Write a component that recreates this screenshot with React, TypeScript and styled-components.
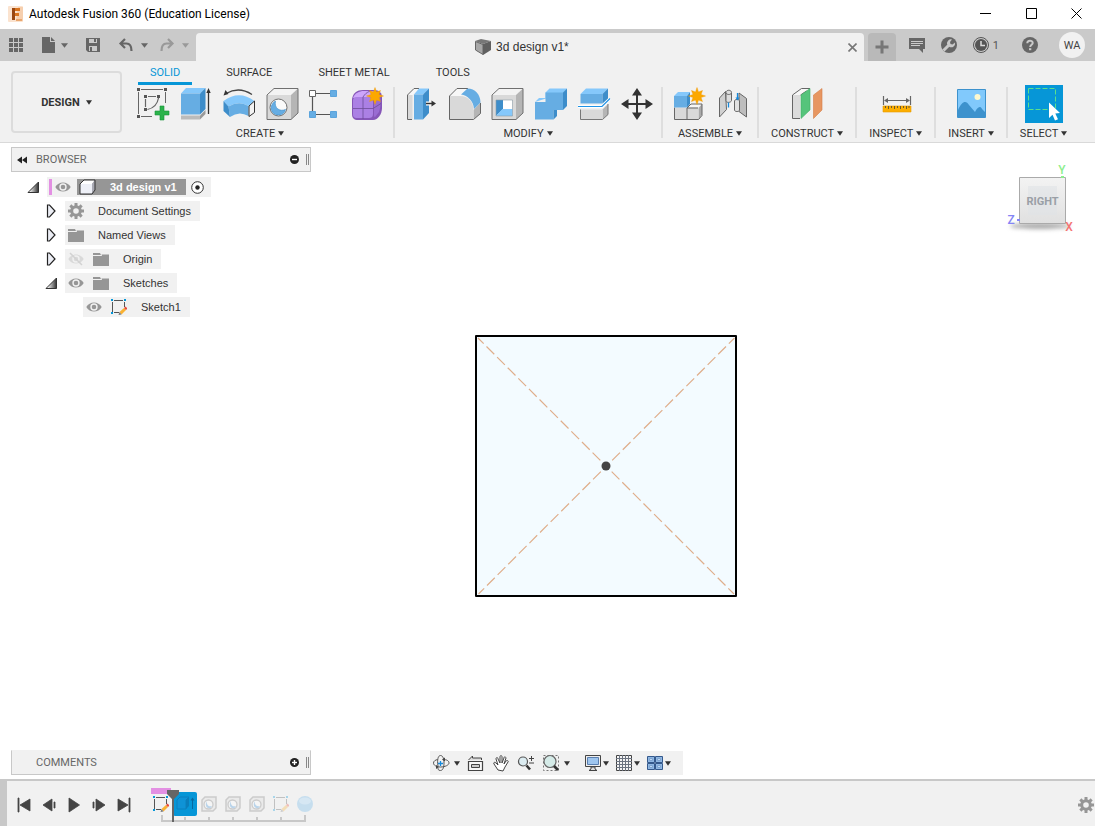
import React from "react";
import styled, { createGlobalStyle, css } from "styled-components";

const GlobalStyle = createGlobalStyle`
  * { box-sizing: border-box; }
  body { margin: 0; background: #fff; color: #333; font-family: "Liberation Sans", Arial, sans-serif; font-size: 11px; }
  button { border: 0; padding: 0; margin: 0; background: none; color: inherit; font: inherit; cursor: pointer; }
  svg { display: block; flex: none; }
  ul { list-style: none; margin: 0; padding: 0; }
`;

const Page = styled.div`
  min-height: 100vh;
  display: flex;
  flex-direction: column;
`;

/* ---------- window title ---------- */

const TitleBar = styled.header`
  height: 29px;
  display: flex;
  align-items: center;
  gap: 6px;
  padding-left: 8px;
  background: #fff;
  padding-bottom: 2px;
`;

const WindowTitle = styled.h1`
  margin: 0;
  flex: 1;
  font: 400 12px/16px Roboto, "Open Sans", sans-serif;
  color: #000;
`;

const WindowControls = styled.div`
  display: flex;
`;

const WindowButton = styled.button`
  width: 46px;
  height: 27px;
  display: grid;
  place-items: center;
  &:last-child { width: 41px; padding-left: 4px; }
`;

/* ---------- document bar ---------- */

const DocumentBar = styled.div`
  height: 32px;
  display: flex;
  align-items: flex-end;
  background: #cacaca;
  color: #666;
`;

const QuickTools = styled.div`
  height: 32px;
  display: flex;
  align-items: center;
  gap: 17px;
  padding: 0 7px 0 8px;
`;

const HistoryTools = styled.div`
  display: flex;
  gap: 11px;
`;

const QuickButton = styled.button<{ $faded?: boolean; $gap?: number }>`
  display: flex;
  align-items: center;
  gap: ${(p) => p.$gap ?? 5}px;
  color: ${(p) => (p.$faded ? "#999" : "#666")};
`;

const DocumentTab = styled.div`
  flex: 1;
  height: 28px;
  display: flex;
  align-items: center;
  border-radius: 4px 4px 0 0;
  background: #f1f1f1;
`;

const DocumentName = styled.div`
  flex: 1;
  display: flex;
  align-items: center;
  justify-content: center;
  gap: 5px;
  padding-left: 6px;
  font-size: 12px;
  color: #333;
`;

const TabClose = styled.button`
  width: 22px;
  height: 28px;
  display: grid;
  place-items: center;
`;

const NewTab = styled.button`
  width: 28px;
  height: 28px;
  margin: 0 4px;
  display: grid;
  place-items: center;
  border-radius: 4px 4px 0 0;
  background: #b9b9b9;
  color: #777;
`;

const AccountTools = styled.div`
  height: 32px;
  display: flex;
  align-items: center;
  gap: 16px;
  padding: 0 10px 0 9px;
`;

const Jobs = styled(QuickButton)`
  font-family: Roboto, sans-serif;
  margin-right: 7px;
  color: #555;
`;

const Avatar = styled.button`
  width: 26px;
  height: 26px;
  margin-left: 5px;
  border-radius: 50%;
  background: #f1f1f1;
  color: #444;
  font-family: Roboto, sans-serif;
`;

/* ---------- ribbon ---------- */

const Ribbon = styled.section`
  display: flex;
  background: #f1f1f1;
  border-bottom: 1px solid #d9d9d9;
  font-family: Roboto, "Liberation Sans", sans-serif;
  font-size: 11px;
`;

const Workspace = styled.button`
  width: 111px;
  height: 62px;
  margin: 10px 0 0 11px;
  display: flex;
  align-items: center;
  justify-content: center;
  gap: 6px;
  border: 2px solid #dcdcdc;
  border-radius: 4px;
  font-weight: 700;
`;

const RibbonBody = styled.div`
  flex: 1;
  padding-left: 9px;
`;

const RibbonTabs = styled.nav`
  height: 24px;
  display: flex;
  gap: 22px;
  padding-left: 7px;
`;

const RibbonTab = styled.button<{ $active?: boolean }>`
  height: 24px;
  padding: 2px 12px 0;
  line-height: 19px;
  border-bottom: 3px solid ${(p) => (p.$active ? "#0696d7" : "transparent")};
  color: ${(p) => (p.$active ? "#0696d7" : "#333")};
`;

const RibbonGroups = styled.div`
  display: flex;
`;

const Divider = styled.span`
  width: 2px;
  margin: 2px 4px 4px;
  background: #dedede;
`;

const Group = styled.div`
  display: flex;
  flex-direction: column;
`;

const GroupTools = styled.div`
  display: flex;
  justify-content: center;
`;

const ToolButton = styled.button`
  width: 43px;
  height: 38px;
  display: grid;
  place-items: center;
`;

const GroupLabel = styled.button`
  height: 19px;
  padding: 2px 8px 0;
  display: flex;
  align-items: center;
  justify-content: center;
  gap: 3px;
`;

/* ---------- canvas ---------- */

const Canvas = styled.main`
  flex: 1;
  min-height: 520px;
  position: relative;
  display: flex;
  flex-direction: column;
  justify-content: space-between;
  padding: 4px 0 4px 11px;
  background: #fff;
`;

const Sketch = styled.svg`
  position: absolute;
  left: 474px;
  top: 191px;
`;

const ViewCube = styled.svg`
  position: absolute;
  right: 15px;
  top: 17px;
`;

const PanelHeader = styled.div<{ $open?: boolean }>`
  width: 300px;
  height: 25px;
  display: flex;
  align-items: center;
  gap: 7px;
  padding: 0 1px 0 5px;
  border: 1px solid #c8c8c8;
  ${(p) => !p.$open && css`border-top-color: #f1f1f1; padding-left: 24px;`}
  background: #f1f1f1;
  font-family: Roboto, sans-serif;
  color: #666;
`;

const PanelTitle = styled.h2`
  margin: 0;
  flex: 1;
  font-size: 11px;
  font-weight: 400;
`;

const PanelGrip = styled.span`
  width: 3px;
  height: 11px;
  border: solid #888;
  border-width: 0 1px;
`;

const Tree = styled.ul`
  padding: 5px 0 0 15px;
`;

const TreeRow = styled.li<{ $level: number }>`
  height: 20px;
  margin-bottom: 4px;
  padding-left: ${(p) => p.$level * 18}px;
  display: flex;
  align-items: center;
`;

const Twisty = styled.button`
  width: 21px;
  height: 20px;
  display: flex;
  align-items: center;
`;

const TreeItem = styled.div`
  height: 20px;
  display: flex;
  align-items: center;
  gap: 9px;
  padding: 0 9px 0 3px;
  background: #f1f1f1;
`;

const TreeLabel = styled.span`
  padding-left: 5px;
`;

const RootItem = styled(TreeItem)`
  gap: 5px;
  padding: 0 7px 0 2px;
`;

const RootMark = styled.span`
  width: 3px;
  height: 16px;
  margin-right: -2px;
  background: #e390e3;
`;

const RootName = styled.span`
  height: 16px;
  margin-left: 1px;
  padding: 0 9px 0 2px;
  display: flex;
  align-items: center;
  gap: 14px;
  background: #969696;
  color: #fff;
  font-weight: 700;
`;

const CanvasFooter = styled.div`
  display: flex;
  gap: 119px;
`;

const NavBar = styled.div`
  height: 24px;
  display: flex;
  align-items: center;
  gap: 14px;
  padding: 0 12px 0 2px;
  margin-top: 1px;
  background: #f1f1f1;
`;

const NavGroup = styled.div<{ $gap: number }>`
  display: flex;
  gap: ${(p) => p.$gap}px;
`;

const NavButton = styled(QuickButton)`
  color: #333;
`;

/* ---------- timeline ---------- */

const TimelineBar = styled.footer`
  height: 47px;
  display: flex;
  border-top: 2px solid #c8c8c8;
  border-left: 7px solid #c8c8c8;
  background: #f1f1f1;
`;

const Playback = styled.div`
  display: flex;
  align-items: center;
  gap: 7px;
  padding: 3px 16px 0 8px;
`;

const PlayButton = styled.button`
  width: 18px;
  height: 18px;
`;

const Timeline = styled.div`
  position: relative;
  flex: 1;
  display: flex;
  padding-top: 11px;
`;

const Feature = styled.button<{ $active?: boolean; $pending?: boolean }>`
  width: 24px;
  height: 24px;
  display: grid;
  place-items: center;
  border-radius: 2px;
  background: ${(p) => (p.$active ? "#0696d7" : "none")};
  svg { opacity: ${(p) => (p.$pending ? 0.3 : 1)}; }
`;

const TrackOverlay = styled.svg`
  position: absolute;
  left: 0;
  top: 7px;
  pointer-events: none;
`;

const SettingsButton = styled.button`
  width: 17px;
  padding-top: 3px;
`;

/* ---------- small glyphs ---------- */

type GlyphProps = { w?: number; h?: number; children: React.ReactNode };
const Glyph = ({ w = 16, h = 16, children }: GlyphProps) => (
  <svg width={w} height={h} viewBox={`0 0 ${w} ${h}`} fill="none" aria-hidden="true">{children}</svg>
);

const Caret = ({ w = 7 }: { w?: number }) => (
  <Glyph w={w} h={5}><path d={`M0 .3H${w}L${w / 2} 4.8Z`} fill="currentColor" /></Glyph>
);

const FusionLogo = () => (
  <Glyph w={15} h={16}>
    <rect width="15" height="16" rx="1" fill="#fbe3cf" />
    <path d="M10 1h5v14H8z" fill="#f6cfae" />
    <path d="M4 2h8v3H7v2h4v3H7v4H4z" fill="#d9741f" />
    <path d="M4 2h3v12H4z" fill="#994712" />
    <path d="M8 13l6 0v2H8z" fill="#e9a76f" />
  </Glyph>
);

const GridGlyph = () => (
  <Glyph>
    {[1, 6, 11].map((y) => [1, 6, 11].map((x) => (
      <rect key={`${x}-${y}`} x={x} y={y} width="4" height="4" fill="currentColor" />
    )))}
  </Glyph>
);
const FileGlyph = () => (
  <Glyph><path d="M1 0h8v5h5v11H1zM10 0l4 4h-4z" fill="currentColor" /></Glyph>
);
const SaveGlyph = () => (
  <Glyph>
    <path fillRule="evenodd" d="M1 1h14v14H3l-2-2zM4 2v4h8V2zM4 9v5h8V9z" fill="currentColor" />
    <path d="M9 2h2v3H9zM5 10h2v4H5z" fill="currentColor" />
  </Glyph>
);
const UndoGlyph = ({ flip = false }: { flip?: boolean }) => (
  <Glyph>
    <g transform={flip ? "matrix(-1 0 0 1 16 0)" : undefined}>
      <path d="M7 2L2.500 6.500 7 11M3 6.500h5.500c3.300 0 5 2 5 7.500" stroke="currentColor" strokeWidth="2.200" />
    </g>
  </Glyph>
);
const CommentGlyph = () => (
  <Glyph>
    <path d="M0 1h16v11h-2v4l-4-4H0z" fill="currentColor" />
    <path d="M2 4.500h12M2 6.500h12M2 8.500h9" stroke="#cacaca" />
  </Glyph>
);
const WrenchGlyph = () => (
  <Glyph>
    <circle cx="8" cy="8" r="8" fill="currentColor" />
    <path d="M2.500 13.500L8 8" stroke="#cacaca" strokeWidth="3" />
    <path d="M6 7a4 4 0 0 1 5-4.500L9 5l.5 2 2 .5 2.500-2A4 4 0 0 1 8.500 10z" fill="#cacaca" />
  </Glyph>
);
const ClockGlyph = () => (
  <Glyph>
    <circle cx="8" cy="8" r="7.500" stroke="currentColor" />
    <circle cx="8" cy="8" r="6" fill="currentColor" />
    <path d="M8 4v4.500h4" stroke="#dcdcdc" strokeWidth="1.500" />
  </Glyph>
);
const HelpGlyph = () => (
  <Glyph>
    <circle cx="8" cy="8" r="8" fill="currentColor" />
    <path d="M5.300 6.200C5.300 3 10.700 3 10.700 6c0 1.800-2.500 1.800-2.500 4" stroke="#cacaca" strokeWidth="2" />
    <path d="M7 11.200h2.300v2H7z" fill="#cacaca" />
  </Glyph>
);
const DocumentCube = () => (
  <Glyph>
    <path d="M0 2l6-2 10 2-8 3z" fill="#777" />
    <path d="M.5 2.500l7.500 3v10L.5 11z" fill="#a8a8a8" stroke="#666" />
    <path d="M16 2L8 5v11l8-5z" fill="#606060" />
  </Glyph>
);

const gearTeeth = [0, 45, 90, 135, 180, 225, 270, 315];
const GearGlyph = () => (
  <Glyph>
    <circle cx="8" cy="8" r="4.300" stroke="#969696" strokeWidth="3" />
    {gearTeeth.map((a) => (
      <path key={a} d="M6.500 0h3v3.500h-3z" fill="#969696" transform={`rotate(${a} 8 8)`} />
    ))}
  </Glyph>
);
const FolderGlyph = () => (
  <Glyph><path d="M0 2h7l1 2H0zM0 5h16v10H0zM8.500 3.500H16V5H9z" fill="#969696" /></Glyph>
);
const EyeGlyph = ({ off = false }: { off?: boolean }) => (
  <Glyph>
    <g opacity={off ? 0.25 : 1}>
      <path d="M.3 8C3.500 2 12.500 2 15.700 8 12.500 14 3.500 14 .3 8z" fill="#969696" />
      <circle cx="8" cy="8" r="3" stroke="#f1f1f1" strokeWidth="1.400" />
      {off && <path d="M2 2l12 12" stroke="#777" strokeWidth="1.500" />}
    </g>
  </Glyph>
);
const BodyGlyph = () => (
  <Glyph w={17}>
    <path d="M1 5l4-4h11l-3 4z" fill="#fff" /><path d="M13 5l3-4v10l-3 4z" fill="#a9aab4" />
    <path d="M1 5h12v10H1z" fill="#eef0f7" />
    <path d="M1 5l4-4h11v10l-3 4H1z" stroke="#333" strokeLinejoin="round" />
  </Glyph>
);
const TargetGlyph = () => (
  <Glyph w={13} h={13}>
    <circle cx="6.500" cy="6.500" r="5.800" stroke="#333" fill="#fff" /><circle cx="6.500" cy="6.500" r="2.200" fill="#222" />
  </Glyph>
);
const SketchGlyph = () => (
  <Glyph>
    <path d="M3 1.500h9M1.500 3v10M13.500 3v5M3 13.500h5" stroke="#555" />
    <path d="M0 0h2v2H0zM13 0h2v2h-2zM0 13h2v2H0z" fill="#0696d7" />
    <path d="M8.500 13l4.500-4 2 2-4.500 4.500z" fill="#f9b233" />
    <path d="M8.500 13l2 2.500-3 .5z" fill="#777" /><path d="M13 9l1.500-1.500 2 2L15 11z" fill="#e8483a" />
  </Glyph>
);
const ClosedTwisty = () => (
  <Glyph w={13} h={14}><path d="M3.500 1h2l5.500 6-5.500 6h-2z" fill="#eceef5" stroke="#222" strokeWidth="1.200" /></Glyph>
);
const OpenTwisty = () => (
  <Glyph w={13} h={12}>
    <defs><linearGradient id="twisty"><stop offset=".2" stopColor="#eee" /><stop offset="1" stopColor="#333" /></linearGradient></defs>
    <path d="M2 11.500L12.500 1v10.500z" fill="url(#twisty)" stroke="#333" />
  </Glyph>
);
const PanelDot = ({ plus = false }: { plus?: boolean }) => (
  <Glyph w={9} h={9}>
    <circle cx="4.500" cy="4.500" r="4.500" fill="#222" /><path d="M2 4.500h5" stroke="#fff" strokeWidth="1.400" />
    {plus && <path d="M4.500 2v5" stroke="#fff" strokeWidth="1.400" />}
  </Glyph>
);

/* ---------- ribbon icons, all on a 38px grid ---------- */

const Art = ({ children }: { children: React.ReactNode }) => <Glyph w={38} h={38}>{children}</Glyph>;

const STAR = "M0-8.500L1.500-4 5.500-5.500 4-1.500 8.500 0 4 1.500 5.500 5.500 1.500 4 0 8.500-1.500 4-5.500 5.500-4 1.500-8.500 0-4-1.500-5.500-5.500-1.500-4Z";
const Star = ({ x, y }: { x: number; y: number }) => (
  <path d={STAR} transform={`translate(${x} ${y})`} fill="#fca800" stroke="#f09400" strokeWidth=".4" />
);

const SketchArt = () => (
  <Art>
    <path d="M7 4.500h22M4.500 7v22M31.500 7v11M7 31.500h11" stroke="#666" />
    <path d="M14 11.500h8M11.500 14v8M24.500 13c-1 6-4 10-11 11.500" stroke="#666" strokeWidth="1.200" />
    <path d="M3 3h3v3H3zM30 3h3v3h-3zM3 30h3v3H3zM10 10h3v3h-3zM23 10h3v3h-3zM10 23h3v3h-3z" fill="#555" />
    <path d="M26 21h4v5h5v4h-5v5h-4v-5h-5v-4h5z" fill="#2bb34b" stroke="#17943a" strokeWidth=".6" />
  </Art>
);
const ExtrudeArt = () => (
  <Art>
    <path d="M4 30.500h19v4H4z" fill="#bbb" /><path d="M23 30.500l5.500-5.500v4L23 34.500z" fill="#999" />
    <path d="M4 8.500L9 3h19.500L23 8.500z" fill="#85c8fb" /><path d="M4 8.500h19v21H4z" fill="#66ade3" />
    <path d="M23 8.500L28.500 3v21L23 29.500z" fill="#3d8dca" />
    <path d="M31.500 6v23" stroke="#333" strokeWidth="1.300" /><path d="M29.300 8l2.200-5 2.200 5z" fill="#333" />
  </Art>
);
const RevolveArt = () => (
  <Art>
    <path d="M3.500 16Q19 4.500 34.500 16L28.500 21Q19 15.500 8.500 21.500z" fill="#85c8fb" />
    <path d="M8.500 21.500Q19 15.500 28.500 21v10Q19 25.500 10 32z" fill="#66ade3" />
    <path d="M3.500 16l5 5.500L10 32l-6.500-6z" fill="#3d8dca" />
    <path d="M29 21l5.500-5v11.500l-5.500 4z" fill="#f3f3f3" stroke="#333" />
    <path d="M6 8.500Q19 1 32 9.500" stroke="#444" strokeWidth="1.300" /><path d="M3.500 10.500l2-5.500 3 4z" fill="#333" />
  </Art>
);
const BoxBase = ({ right = 28, depth = 35 }: { right?: number; depth?: number }) => (
  <>
    <path d={`M4 10l7-6.500h${depth - 11}L${right} 10z`} fill="#f3f3f3" />
    <path d={`M${right} 10L${depth} 3.500v24.500L${right} 34.500z`} fill="#b5b5b5" />
    <path d={`M4 10h${right - 4}v24.500H4z`} fill="#d9d9d9" />
    <path d={`M4 10l7-6.500h${depth - 11}V28L${right} 34.500H4z`} stroke="#707070" />
  </>
);
const HoleArt = () => (
  <Art>
    <BoxBase />
    <circle cx="15.500" cy="22.500" r="8.500" fill="#fafafa" stroke="#707070" />
    <path d="M12.500 16c-1.500 7 4 11 10 8.500-1 4-4 5.500-7 5.500-8 0-10-10-3-14z" fill="#66ade3" stroke="#3d8dca" strokeWidth=".6" />
  </Art>
);
const PatternArt = () => (
  <Art>
    <path d="M10 8.500h14M6.500 12v14M10 29.500h14" stroke="#555" strokeWidth="1.200" />
    <path d="M3.500 5.500h6v6h-6z" fill="#fff" stroke="#666" />
    <path d="M24.500 5.500h6v6h-6zM3.500 26.500h6v6h-6zM24.500 26.500h6v6h-6z" fill="#66ade3" stroke="#5ba4dc" />
  </Art>
);
const FormArt = () => (
  <Art>
    <path d="M3 14c1-6 5-9 11-9h10c7 0 9 3 9 8v10c0 6-4 12-9 12H9c-4 0-6-2-6-6z" fill="#8656b8" />
    <path d="M4 13c2-5 6-7 11-7h9c3 1 2 4-2 6-5 1-13 0-18 1z" fill="#cda5fb" />
    <path d="M4 15c0-2 2-3 5-3h11c3 0 4 2 4 5v12c0 3-2 4-4 4H8c-3 0-4-1-4-4z" fill="#ab80e4" />
    <path d="M25 15l6-4c1 5 1 10-1 16l-4 5c-1 0-1-1-1-3z" fill="#9a6cd2" />
    <path d="M14 12v22M4 23.500h20l8-5M14 12c2-3 3-4 7-6" stroke="#6d4c97" strokeWidth=".8" />
    <Star x={26} y={11} />
  </Art>
);
const PressPullArt = () => (
  <Art>
    <path d="M5.500 10L12 3.500h5L10.500 10z" fill="#f7f7f7" /><path d="M5.500 10h5v24.500h-5z" fill="#d9d9d9" />
    <path d="M10 34.500H5.500V10L12 3.500h5" stroke="#666" />
    <path d="M12 9.500l5-6h10l-6 6z" fill="#85c8fb" /><path d="M12 9.500h9v25h-9z" fill="#66ade3" /><path d="M21 9.500l6-6V28l-6 6.500z" fill="#3d8dca" />
    <path d="M24 18.500h7" stroke="#fff" strokeWidth="4" /><path d="M24 18.500h7" stroke="#333" strokeWidth="1.500" />
    <path d="M29.500 15.500l4.500 3-4.500 3z" fill="#333" />
  </Art>
);
const FilletArt = () => (
  <Art>
    <path d="M4.500 11L12 3.500h11L16 11z" fill="#f7f7f7" />
    <path d="M28.500 25l7-7.500v11l-7 6z" fill="#b5b5b5" />
    <path d="M4.500 34.500V11H15c8 0 13.500 6 13.500 14v9.500z" fill="#d9d9d9" />
    <path d="M35.500 18v10.500l-7 6h-24V11L12 3.500h11" stroke="#666" />
    <path d="M16 9.500l6.500-6c7.500 0 13 6 13 14L29 24c-.5-8-6-13.500-13-14.500z" fill="#66ade3" />
  </Art>
);
const ShellArt = () => (
  <Art>
    <BoxBase right={28} depth={35} />
    <path d="M8 15h16.500v16H8z" fill="#fff" />
    <path d="M8 15h7v9l-7 7z" fill="#3d8dca" /><path d="M8 31l6.500-7h10v7z" fill="#85c8fb" />
    <path d="M8 15h16.500v16H8z" stroke="#8c9aa5" strokeWidth=".6" />
  </Art>
);
const CombineArt = () => (
  <Art>
    <path d="M4 17l4-4h6.500V7.500l4-4H36L32 8z" fill="#85c8fb" /><path d="M14.500 7.500H32V25h-9.500v9.500H4V17h10.500z" fill="#66ade3" />
    <path d="M32 7.500l4-4V21l-4 4zM22.500 25H26v6l-3.500 3.500z" fill="#3d8dca" />
  </Art>
);
const SplitArt = () => (
  <Art>
    <path d="M6.500 9L12 3.500h22L28.500 9z" fill="#85c8fb" /><path d="M6.500 9h22v9.500h-22z" fill="#66ade3" /><path d="M28.500 9L34 3.500V14l-5.500 4.500z" fill="#3d8dca" />
    <path d="M28.500 24.500L34 19v10.500l-5.500 5z" fill="#b5b5b5" /><path d="M6.500 24.500h22v10h-22z" fill="#d9d9d9" />
    <path d="M34 19v10.500l-5.500 5h-22v-10" stroke="#777" />
    <path d="M4 21.500h24l8-8" stroke="#fff" strokeWidth="3" /><path d="M4 21.500h24l8-8" stroke="#1f93e6" strokeWidth="1.200" />
  </Art>
);
const MoveArt = () => (
  <Art>
    <path d="M20 9v20M10 19h20" stroke="#333" strokeWidth="2" />
    <path d="M20 3l5 7.500H15zM20 35l5-7.500H15zM4 19l7.500-5v10zM36 19l-7.500-5v10z" fill="#333" />
  </Art>
);
const ComponentArt = () => (
  <Art>
    <path d="M17 23l4-4h11l-3.500 4z" fill="#f7f7f7" /><path d="M28.500 23l3.500-4v11l-3.500 4.500z" fill="#aaa" />
    <path d="M4.500 22.500H28.500v12H4.500z" fill="#d9d9d9" />
    <path d="M4.500 22.500v12h24l3.500-4V19H21l-4 4v11.500M17 23h11" stroke="#666" />
    <path d="M4 11l4-4h12l-3 4z" fill="#85c8fb" /><path d="M4 11h13v11.500H4z" fill="#66ade3" /><path d="M17 11l3-4v12l-3 3.500z" fill="#3d8dca" />
    <Star x={27} y={11} />
  </Art>
);
const JointArt = () => (
  <Art>
    <path d="M6.500 13l6-6.500 1 18-7 7.500z" fill="#d0d0d0" stroke="#666" />
    <path d="M13 7.500c0-3 5.500-3 5.500 0v8c0 2-5.500 3-5.500 0z" fill="#ddd" stroke="#666" /><path d="M13 8c1 2 4.500 2 5.500 0" stroke="#666" />
    <path d="M26 8l7.500 5.500v18.500L26 26.500z" fill="#bebebe" stroke="#666" />
    <path d="M21.500 16c0-2 5-2 5 0v9c0 2-5 2-5 0z" fill="#e2e2e2" stroke="#666" />
    <path d="M15.500 17.500v5M24.500 8v6" stroke="#1589dc" strokeWidth="1.300" /><path d="M22.500 12.500h4l-2 3z" fill="#1589dc" />
  </Art>
);
const ConstructArt = () => (
  <Art>
    <path d="M4.500 10l9-6.500h8.500L12.500 10z" fill="#f7f7f7" /><path d="M4.500 10H12v23.500H4.500z" fill="#dcdcdc" />
    <path d="M12 33.500H4.500V10l9-6.500H22M12.500 10l6-4" stroke="#666" />
    <path d="M13 10l9-6.500V25l-9 8.500z" fill="#55c47b" stroke="#3faf66" strokeWidth=".6" />
    <path d="M25.500 10L34 3.500V25l-8.500 8.500z" fill="#e79661" stroke="#d57e48" strokeWidth=".6" />
  </Art>
);
const InspectArt = () => (
  <Art>
    <path d="M6.500 11v9M33.500 11v9M8 15.500h24" stroke="#666" strokeWidth="1.200" />
    <path d="M7 15.500l4-2.500v5zM33 15.500L29 13v5z" fill="#666" />
    <path d="M6 21h28v6H6z" fill="#fcae00" stroke="#e89a00" strokeWidth=".6" />
    <path d="M8.500 21v2M11.500 21v3M14.500 21v2M17.500 21v3M20.500 21v2M23.500 21v3M26.500 21v2M29.500 21v3M32 21v2" stroke="#6b5a2c" />
  </Art>
);
const InsertArt = () => (
  <Art>
    <path d="M5.500 4.500h28v28h-28z" fill="#81c9fc" />
    <path d="M6 25c4-9 8-10 11-5l6 7c2-4 5-7 7-3l3 3v5.500H6z" fill="#3d92cd" />
    <circle cx="25.500" cy="12" r="3" fill="#fdf8cf" /><path d="M5.500 4.500h28v28h-28z" stroke="#3d92cd" />
  </Art>
);
const SelectArt = () => (
  <Art>
    <path d="M0 0h38v38H0z" fill="#0696d7" />
    <path d="M3.500 3.500h27v21h-27z" stroke="#5be08c" strokeDasharray="5 2" />
    <path d="M24 17.500l11 10.500-4.700.6 2.700 5.600-3 1.300-2.500-5.700-3.500 3.200z" fill="#fff" />
  </Art>
);

const ribbonTabs = ["SOLID", "SURFACE", "SHEET METAL", "TOOLS"];
const ribbonGroups: { name: string; tools: [string, React.FC][] }[] = [
  { name: "CREATE", tools: [["Create Sketch", SketchArt], ["Extrude", ExtrudeArt], ["Revolve", RevolveArt], ["Hole", HoleArt], ["Pattern", PatternArt], ["Create Form", FormArt]] },
  { name: "MODIFY", tools: [["Press Pull", PressPullArt], ["Fillet", FilletArt], ["Shell", ShellArt], ["Combine", CombineArt], ["Split Body", SplitArt], ["Move", MoveArt]] },
  { name: "ASSEMBLE", tools: [["New Component", ComponentArt], ["Joint", JointArt]] },
  { name: "CONSTRUCT", tools: [["Offset Plane", ConstructArt]] },
  { name: "INSPECT", tools: [["Measure", InspectArt]] },
  { name: "INSERT", tools: [["Insert Image", InsertArt]] },
  { name: "SELECT", tools: [["Select", SelectArt]] },
];

const treeRows: { label: string; level: number; open?: boolean; leaf?: boolean; icons: React.ReactNode }[] = [
  { label: "Document Settings", level: 1, icons: <GearGlyph /> },
  { label: "Named Views", level: 1, icons: <FolderGlyph /> },
  { label: "Origin", level: 1, icons: <><EyeGlyph off /><FolderGlyph /></> },
  { label: "Sketches", level: 1, open: true, icons: <><EyeGlyph /><FolderGlyph /></> },
  { label: "Sketch1", level: 2, leaf: true, icons: <><EyeGlyph /><SketchGlyph /></> },
];

/* ---------- navigation icons ---------- */

const Nav = ({ children }: { children: React.ReactNode }) => <Glyph w={18} h={18}>{children}</Glyph>;

const OrbitIcon = () => (
  <Nav>
    <path d="M11 5.500c4 0 6 1.500 6 3.500s-4 4-8.500 4S1.500 11 1.500 9s2-3 4-3.500" stroke="#555" />
    <path d="M6 12C5 6 6 1.500 8.500 1.500S12 5 12 9s-1 7.500-3.500 7.500S6 15 6 14" stroke="#555" />
    <path d="M13 3.500l-3 2 3 2zM4 11l3 2-3 2z" fill="#444" /><path d="M8.500 7v5M6 9.500h5" stroke="#1589dc" strokeWidth="1.300" />
  </Nav>
);
const LookIcon = () => (
  <Nav>
    <path d="M1.500 7.500h14v9h-14z" fill="#f8f8f8" stroke="#444" strokeWidth="1.200" /><path d="M4.500 10.500h8v3h-8z" fill="#ccc" stroke="#444" />
    <path d="M1.500 6l4-4v2h9v2" fill="#ddd" stroke="#444" />
  </Nav>
);
const HandIcon = () => (
  <Nav>
    <path d="M6 16L2 10c-1-2 1-2 2-1l2 2-2-6c0-2 2-2 2 0l2 4V3c0-2 2-2 2 0v6l2-5c0-2 2-1 2 0l-2 6 2-3c1-1 3 0 2 1l-3 5-2 4z" fill="#fff" stroke="#444" strokeLinejoin="round" />
  </Nav>
);
const ZoomIcon = () => (
  <Nav>
    <circle cx="6" cy="7.500" r="4.500" fill="#dcecf1" stroke="#555" strokeWidth="1.200" /><path d="M9.500 11.500l3.500 4" stroke="#333" strokeWidth="2.600" />
    <path d="M12 4.500h5M14.500 2v5M12 9h5" stroke="#444" />
  </Nav>
);
const FitIcon = () => (
  <Nav>
    <path d="M1.500 1.500h15v15h-15z" stroke="#777" strokeDasharray="2 2" />
    <circle cx="8" cy="7.500" r="6" fill="#d5ebe8" stroke="#666" strokeWidth="1.200" /><path d="M12 12l4 4" stroke="#333" strokeWidth="2.600" />
  </Nav>
);
const DisplayIcon = () => (
  <Nav>
    <path d="M1.500 1.500h15v11h-15z" fill="#eee" stroke="#444" /><path d="M3.500 3.500h11v7h-11z" fill="#9ec5ee" stroke="#5a7fb0" />
    <path d="M7 13h4v2l2 1.500H5L7 15z" fill="#ddd" stroke="#444" />
  </Nav>
);
const GridIcon = () => (
  <Nav>
    <path d="M1.500 1.500h15v15h-15z" fill="#f5f5f5" stroke="#444" />
    <path d="M4.500 1v16M7.500 1v16M10.500 1v16M13.500 1v16M1 4.500h16M1 7.500h16M1 10.500h16M1 13.500h16" stroke="#6b7380" />
  </Nav>
);
const ViewportsIcon = () => (
  <Nav>
    <path d="M1.500 2.500h7v6h-7zM9.500 2.500h7v6h-7zM1.500 9.500h7v6h-7zM9.500 9.500h7v6h-7z" fill="#8fb7e3" stroke="#34598c" />
    <path d="M3.500 4.500h3v2h-3zM11.500 4.500h3v2h-3zM3.500 11.500h3v2h-3zM11.500 11.500h3v2h-3z" fill="#bdd8f3" stroke="#7da3d0" />
  </Nav>
);

/* ---------- timeline icons ---------- */

const playback: [string, string][] = [
  ["Go to start", "M3 2h1v14H3zM15 3v12L5 9z"],
  ["Step back", "M12 3v12L3 9zM14 6h1v6h-1z"],
  ["Play", "M4 2v14l10.500-7z"],
  ["Step forward", "M6 3v12l9-6zM3 6h1v6H3z"],
  ["Go to end", "M3 3v12l10-6zM14 2h1v14h-1z"],
];
const ExtrudeFeature = () => (
  <Glyph w={20} h={18}>
    <path d="M2 5l3-3h9l-3 3v9H2z" fill="#0f93d6" stroke="#0a80bf" /><path d="M11 5l3-3v9l-3 3z" fill="#0a7ebb" />
    <path d="M17.500 5v9" stroke="#07699f" /><path d="M15.500 5.500l2-3 2 3z" fill="#07699f" />
  </Glyph>
);
const HoleFeature = () => (
  <Glyph>
    <path d="M1 4l3-3h11v11l-3 3H1z" fill="#ddd" stroke="#777" strokeWidth="1.500" />
    <circle cx="7.500" cy="8.500" r="4.500" fill="#fff" stroke="#777" strokeWidth="1.300" /><path d="M6 5c-1 4 2 6 5 5-2 5-9 1-5-5z" fill="#3d95dc" />
  </Glyph>
);
const SphereFeature = () => (
  <Glyph><circle cx="8" cy="8" r="8" fill="#66b4ea" /><ellipse cx="8" cy="5" rx="6" ry="3.500" fill="#9bd3fa" /></Glyph>
);

export default function App() {
  return (
    <Page>
      <GlobalStyle />
      <TitleBar>
        <FusionLogo />
        <WindowTitle>Autodesk Fusion 360 (Education License)</WindowTitle>
        <WindowControls>
          <WindowButton aria-label="Minimize"><Glyph w={11} h={11}><path d="M0 5.500h11" stroke="#000" /></Glyph></WindowButton>
          <WindowButton aria-label="Maximize"><Glyph w={11} h={11}><path d="M.5.500h10v10H.5z" stroke="#000" /></Glyph></WindowButton>
          <WindowButton aria-label="Close"><Glyph w={11} h={11}><path d="M.5.500l10 10M10.500.500l-10 10" stroke="#000" /></Glyph></WindowButton>
        </WindowControls>
      </TitleBar>

      <DocumentBar>
        <QuickTools>
          <QuickButton aria-label="Data panel"><GridGlyph /></QuickButton>
          <QuickButton aria-label="File" $gap={4}><FileGlyph /><Caret /></QuickButton>
          <QuickButton aria-label="Save"><SaveGlyph /></QuickButton>
          <HistoryTools>
            <QuickButton aria-label="Undo" $gap={7}><UndoGlyph /><Caret /></QuickButton>
            <QuickButton aria-label="Redo" $gap={7} $faded><UndoGlyph flip /><Caret /></QuickButton>
          </HistoryTools>
        </QuickTools>
        <DocumentTab>
          <DocumentName><DocumentCube />3d design v1*</DocumentName>
          <TabClose aria-label="Close document">
            <Glyph w={9} h={9}><path d="M.5.500l8 8M8.500.500l-8 8" stroke="#777" strokeWidth="1.600" /></Glyph>
          </TabClose>
        </DocumentTab>
        <NewTab aria-label="New design"><Glyph w={14} h={14}><path d="M7 .5v13M.5 7h13" stroke="currentColor" strokeWidth="3" /></Glyph></NewTab>
        <AccountTools>
          <QuickButton aria-label="Comments"><CommentGlyph /></QuickButton>
          <QuickButton aria-label="Extensions"><WrenchGlyph /></QuickButton>
          <Jobs aria-label="Job status" $gap={4}><ClockGlyph />1</Jobs>
          <QuickButton aria-label="Help"><HelpGlyph /></QuickButton>
          <Avatar>WA</Avatar>
        </AccountTools>
      </DocumentBar>

      <Ribbon>
        <Workspace>DESIGN<Caret w={6} /></Workspace>
        <RibbonBody>
          <RibbonTabs>
            {ribbonTabs.map((t, i) => <RibbonTab key={t} $active={i === 0}>{t}</RibbonTab>)}
          </RibbonTabs>
          <RibbonGroups>
            {ribbonGroups.map((g, i) => (
              <React.Fragment key={g.name}>
                {i > 0 && <Divider />}
                <Group>
                  <GroupTools>
                    {g.tools.map(([name, Icon]) => <ToolButton key={name} aria-label={name}><Icon /></ToolButton>)}
                  </GroupTools>
                  <GroupLabel>{g.name}<Caret w={6} /></GroupLabel>
                </Group>
              </React.Fragment>
            ))}
          </RibbonGroups>
        </RibbonBody>
      </Ribbon>

      <Canvas>
        <Sketch width="264" height="264" viewBox="0 0 264 264" fill="none">
          <path d="M2 2h260v260H2z" fill="#f3fbff" stroke="#000" strokeWidth="2" strokeLinejoin="round" />
          <g stroke="#dfae8b" strokeWidth="1.200" strokeDasharray="11 4" strokeDashoffset="-8">
            <path d="M132 132L4 4" /><path d="M132.500 132L260.500 4" /><path d="M132.500 132L4.500 260" /><path d="M132 132l128 128" />
          </g>
          <circle cx="132" cy="132" r="4.500" fill="#444" />
        </Sketch>
        <ViewCube width="80" height="80" viewBox="0 0 80 80" fill="none">
          <defs>
            <linearGradient id="face" x1="0" y1="0" x2="0" y2="1"><stop stopColor="#f3f3f3" /><stop offset="1" stopColor="#e0e0e0" /></linearGradient>
            <filter id="soft" x="-20%" y="-100%" width="140%" height="300%"><feGaussianBlur stdDeviation="2" /></filter>
          </defs>
          <ellipse cx="40" cy="66" rx="30" ry="3" fill="#aaa" filter="url(#soft)" />
          <path d="M19.500 17.500h46v46h-46z" fill="url(#face)" stroke="#aaa" />
          <path d="M28 26h29v29H28z" fill="#dfe2e6" opacity=".6" />
          <text x="42.500" y="45" textAnchor="middle" fontFamily="Roboto, sans-serif" fontWeight="700" fontSize="11" fill="#9a9fa6">RIGHT</text>
          <g fontFamily="Roboto, sans-serif" fontSize="12" fontWeight="500" textAnchor="middle">
            <text x="62" y="14" fill="#8dee8d">Y</text><text x="11" y="64" fill="#8585f5">Z</text><text x="69" y="71" fill="#f57373">X</text>
          </g>
          <path d="M61 16h3v2h-3z" fill="#8dee8d" /><path d="M17 59h3v2h-3z" fill="#8585f5" />
        </ViewCube>

        <section aria-label="Browser">
          <PanelHeader $open>
            <Glyph w={12} h={8}><path d="M5 .5v7L0 4zM10 .5v7L5 4z" fill="#222" /></Glyph>
            <PanelTitle>BROWSER</PanelTitle>
            <PanelDot />
            <PanelGrip />
          </PanelHeader>
          <Tree>
            <TreeRow $level={0}>
              <Twisty aria-label="Collapse 3d design v1"><OpenTwisty /></Twisty>
              <RootItem>
                <RootMark />
                <EyeGlyph />
                <RootName><BodyGlyph />3d design v1</RootName>
                <TargetGlyph />
              </RootItem>
            </TreeRow>
            {treeRows.map((r) => (
              <TreeRow key={r.label} $level={r.level}>
                <Twisty as={r.leaf ? "span" : "button"} aria-label={r.leaf ? undefined : `Toggle ${r.label}`}>
                  {!r.leaf && (r.open ? <OpenTwisty /> : <ClosedTwisty />)}
                </Twisty>
                <TreeItem>{r.icons}<TreeLabel>{r.label}</TreeLabel></TreeItem>
              </TreeRow>
            ))}
          </Tree>
        </section>

        <CanvasFooter>
          <PanelHeader>
            <PanelTitle>COMMENTS</PanelTitle>
            <PanelDot plus />
            <PanelGrip />
          </PanelHeader>
          <NavBar>
            <NavGroup $gap={7}>
              <NavButton aria-label="Orbit" $gap={4}><OrbitIcon /><Caret w={6} /></NavButton>
              <NavButton aria-label="Look at"><LookIcon /></NavButton>
              <NavButton aria-label="Pan"><HandIcon /></NavButton>
              <NavButton aria-label="Zoom"><ZoomIcon /></NavButton>
              <NavButton aria-label="Fit" $gap={4}><FitIcon /><Caret w={6} /></NavButton>
            </NavGroup>
            <NavGroup $gap={6}>
              <NavButton aria-label="Display settings" $gap={1}><DisplayIcon /><Caret w={6} /></NavButton>
              <NavButton aria-label="Grid and snaps" $gap={1}><GridIcon /><Caret w={6} /></NavButton>
              <NavButton aria-label="Viewports" $gap={1}><ViewportsIcon /><Caret w={6} /></NavButton>
            </NavGroup>
          </NavBar>
        </CanvasFooter>
      </Canvas>

      <TimelineBar>
        <Playback>
          {playback.map(([name, d]) => (
            <PlayButton key={name} aria-label={name}>
              <Glyph w={18} h={18}><path d={d} fill="#444" stroke="#444" strokeWidth=".8" /></Glyph>
            </PlayButton>
          ))}
        </Playback>
        <Timeline>
          <Feature aria-label="Sketch1"><SketchGlyph /></Feature>
          <Feature aria-label="Extrude1" $active><ExtrudeFeature /></Feature>
          <Feature aria-label="Hole1" $pending><HoleFeature /></Feature>
          <Feature aria-label="Hole2" $pending><HoleFeature /></Feature>
          <Feature aria-label="Hole3" $pending><HoleFeature /></Feature>
          <Feature aria-label="Sketch2" $pending><SketchGlyph /></Feature>
          <Feature aria-label="Sphere1" $pending><SphereFeature /></Feature>
          <TrackOverlay width="170" height="36" viewBox="0 0 170 36" fill="none">
            <path d="M2 0h20v6H2z" fill="#e390e3" />
            <path d="M13 27v6h143v-6M36 29v4M60 29v4M84 29v4M108 29v4M132 29v4" stroke="#c8c8c8" strokeWidth="2" />
            <path d="M18 2h12v4l-5 5v23h-2V11l-5-5z" fill="#666" />
          </TrackOverlay>
        </Timeline>
        <SettingsButton aria-label="Timeline settings"><GearGlyph /></SettingsButton>
      </TimelineBar>
    </Page>
  );
}
